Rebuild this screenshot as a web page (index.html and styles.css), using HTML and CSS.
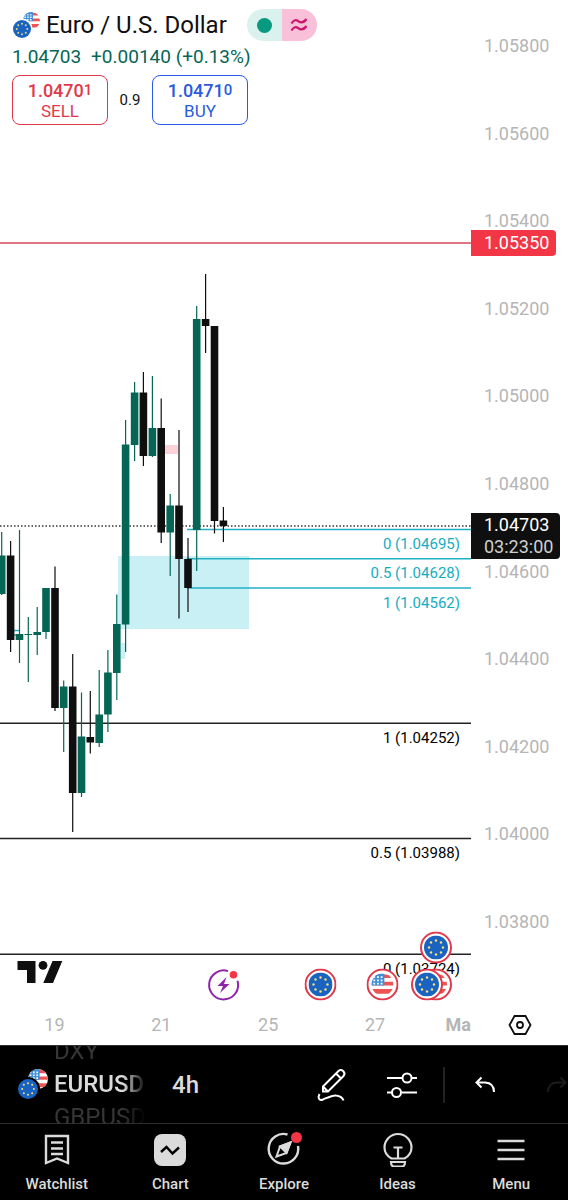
FILE: index.html
```html
<!DOCTYPE html>
<html lang="en">
<head>
    <meta charset="UTF-8">
    <meta name="viewport" content="width=device-width, initial-scale=1.0">
    <title>EURUSD 4h</title>
    <link rel="stylesheet" href="styles.css">
</head>
<body>

<!-- Shared flag artwork -->
<svg class="defs" width="0" height="0" aria-hidden="true">
    <defs>
        <clipPath id="round"><circle cx="12" cy="12" r="12"/></clipPath>
        <symbol id="eu" viewBox="0 0 24 24">
            <circle cx="12" cy="12" r="12" fill="#1b63c1"/>
            <g fill="#f2e27c">
                <circle cx="12" cy="5" r="1.2"/><circle cx="17" cy="7" r="1.2"/>
                <circle cx="19" cy="12" r="1.2"/><circle cx="17" cy="17" r="1.2"/>
                <circle cx="12" cy="19" r="1.2"/><circle cx="7" cy="17" r="1.2"/>
                <circle cx="5" cy="12" r="1.2"/><circle cx="7" cy="7" r="1.2"/>
            </g>
        </symbol>
        <symbol id="us" viewBox="0 0 24 24">
            <g clip-path="url(#round)">
                <rect width="24" height="24" fill="#fff"/>
                <path d="M0 1h24v4H0zM0 9h24v4H0zM0 17h24v5H0z" fill="#ec5554"/>
                <rect width="14" height="13" fill="#3f8fd8"/>
                <path d="M2 3h2v2H2zM6 3h2v2H6zM10 3h2v2h-2zM2 6.500h2v2H2zM6 6.500h2v2H6zM10 6.500h2v2h-2zM2 10h2v2H2zM6 10h2v2H6zM10 10h2v2h-2z" fill="#fff"/>
            </g>
        </symbol>
        <symbol id="eu-event" viewBox="0 0 32 32">
            <circle cx="16" cy="16" r="15" fill="#fff" stroke="#e0394a" stroke-width="2"/>
            <use href="#eu" x="4" y="4" width="24" height="24"/>
        </symbol>
        <symbol id="us-event" viewBox="0 0 32 32">
            <circle cx="16" cy="16" r="15" fill="#fff" stroke="#e0394a" stroke-width="2"/>
            <use href="#us" x="5" y="5" width="22" height="22"/>
        </symbol>
    </defs>
</svg>

<main class="chart">
    <div class="chart-body">
        <div class="plot">
            <svg class="plot-canvas" role="img" aria-label="Euro / U.S. Dollar 4h candles">
                <rect class="zone" x="118" y="556" width="131" height="73"/>
                <rect class="zone" x="121" y="643" width="4" height="16"/>
                <rect class="zone-red" x="165" y="445" width="13" height="9"/>
                <path class="fib-line" d="M14 630.500h5M14 635h3"/>

                <line class="alert-line" x1="0" y1="243" x2="100%" y2="243"/>
                <line class="level" x1="0" y1="723.300" x2="100%" y2="723.300"/>
                <line class="level" x1="0" y1="838.500" x2="100%" y2="838.500"/>
                <line class="level" x1="0" y1="954.300" x2="100%" y2="954.300"/>
                <line class="last-line" x1="0" y1="526" x2="100%" y2="526"/>
                <line class="fib-line" x1="187" y1="529.500" x2="100%" y2="529.500"/>
                <line class="fib-line" x1="187" y1="558.700" x2="100%" y2="558.700"/>
                <line class="fib-line" x1="187" y1="588" x2="100%" y2="588"/>

                <g id="candles"></g>

                <g class="fib-text">
                    <text x="100%" y="549" dx="-11">0 (1.04695)</text>
                    <text x="100%" y="578" dx="-11">0.5 (1.04628)</text>
                    <text x="100%" y="608" dx="-11">1 (1.04562)</text>
                </g>
                <g class="level-text">
                    <text x="100%" y="743" dx="-11">1 (1.04252)</text>
                    <text x="100%" y="858" dx="-11">0.5 (1.03988)</text>
                    <text x="100%" y="974" dx="-11">0 (1.03724)</text>
                </g>

                <!-- Logo -->
                <g fill="#0f0f0f">
                    <path d="M17.500 961H35.500V983H27V970H17.500z"/>
                    <circle cx="43" cy="965.300" r="4.400"/>
                    <path d="M52.500 961H62.300L53 983H43.300z"/>
                </g>

                <!-- Upcoming event -->
                <path d="M228 971.100A14.500 14.500 0 1 0 237.500 980.700" fill="none" stroke="#8e24aa" stroke-width="2"/>
                <path d="M226.500 977L217.500 986H223L220 993L229.500 984H224z" fill="#8e24aa"/>
                <circle cx="233.500" cy="974.700" r="3.800" fill="#f23645"/>

                <use href="#eu-event" x="304.500" y="968.500" width="32" height="32"/>
                <use href="#us-event" x="366.500" y="968.500" width="32" height="32"/>
                <use href="#us-event" x="420" y="968.500" width="32" height="32"/>
                <use href="#eu-event" x="411" y="968.500" width="32" height="32"/>
                <use href="#eu-event" x="420" y="931.500" width="32" height="32"/>
            </svg>

            <div class="legend">
                <div class="symbol-row">
                    <svg class="pair" viewBox="0 0 28 28" aria-hidden="true">
                        <use href="#us" x="11" y="1" width="17" height="17"/>
                        <circle cx="10" cy="18" r="10.500" fill="#fff"/>
                        <use href="#eu" x="1" y="9" width="18" height="18"/>
                    </svg>
                    <h1>Euro / U.S. Dollar</h1>
                    <div class="status">
                        <span class="status-open"><i class="dot"></i></span>
                        <span class="status-approx">
                            <svg width="18" height="14" viewBox="0 0 18 14" fill="none" stroke="#d0126b" stroke-width="2.200" aria-hidden="true">
                                <path d="M1.500 5.500C4 1.500 6 1.500 8.500 3.300S13.500 5 16.500 1M1.500 12.500C4 8.500 6 8.500 8.500 10.300S13.500 12 16.500 8"/>
                            </svg>
                        </span>
                    </div>
                </div>
                <p class="change"><span>1.04703</span><span>+0.00140 (+0.13%)</span></p>
                <div class="trade">
                    <button class="trade-btn sell"><b>1.0470<small>1</small></b>SELL</button>
                    <span class="spread">0.9</span>
                    <button class="trade-btn buy"><b>1.0471<small>0</small></b>BUY</button>
                </div>
            </div>
        </div>

        <div class="price-axis">
            <span>1.05800</span>
            <span>1.05600</span>
            <span>1.05400</span>
            <span>1.05200</span>
            <span>1.05000</span>
            <span>1.04800</span>
            <span>1.04600</span>
            <span>1.04400</span>
            <span>1.04200</span>
            <span>1.04000</span>
            <span>1.03800</span>
            <div class="tag tag-alert">1.05350</div>
            <div class="tag tag-last">1.04703<br><em>03:23:00</em></div>
        </div>
    </div>

    <div class="time-row">
        <div class="time-axis">
            <span>19</span>
            <span>21</span>
            <span>25</span>
            <span>27</span>
            <span class="month">Ma</span>
        </div>
        <button class="axis-settings" aria-label="Chart settings">
            <svg width="24" height="22" viewBox="0 0 24 22" fill="none" stroke="#0f0f0f" stroke-width="1.800">
                <path d="M6.500 2h11l5 9-5 9h-11l-5-9z"/>
                <circle cx="12" cy="11" r="3"/>
            </svg>
        </button>
    </div>
</main>

<div class="toolbar">
    <button class="symbol-picker">
        <svg class="pair" viewBox="0 0 30 31" aria-hidden="true">
            <use href="#us" x="10" y="0" width="20" height="20"/>
            <circle cx="10" cy="20" r="12" fill="#000"/>
            <use href="#eu" x="0" y="10" width="20" height="20"/>
        </svg>
        <span class="wheel">
            <span class="wheel-side">DXY</span>
            <span>EURUSD</span>
            <span class="wheel-side">GBPUSD</span>
        </span>
    </button>
    <button class="interval">4h</button>
    <div class="tools">
        <button aria-label="Draw">
            <svg width="32" height="36" viewBox="0 0 32 36" fill="none" stroke="#fff" stroke-width="2">
                <path d="M7 19.500L22.500 4Q25 2 27.300 4.200T27.500 9L12 24.500H7zM7 19.500L12 24.500M20 6.500l5 5"/>
                <path d="M3.500 27C1.500 31 3 34 7 32.500C13 30 17 28 20 28.500C24 29 26.500 30.500 27.500 33.500"/>
            </svg>
        </button>
        <button aria-label="Indicators">
            <svg width="32" height="28" viewBox="0 0 32 28" fill="none" stroke="#fff" stroke-width="2">
                <path d="M1 7h15.500M25.500 7H31M1 21.500h5M15.500 21.500H31"/>
                <circle cx="21" cy="7" r="4.500"/>
                <circle cx="10.500" cy="21.500" r="4.500"/>
            </svg>
        </button>
    </div>
    <div class="history">
        <button aria-label="Undo">
            <svg width="20" height="18" viewBox="0 0 20 18" fill="none" stroke="#fff" stroke-width="2">
                <path d="M6.500 1.500L1.500 6.500L6.500 11.500M1.500 6.500H10Q19 7 19 16"/>
            </svg>
        </button>
        <button aria-label="Redo" disabled>
            <svg width="20" height="18" viewBox="0 0 20 18" fill="none" stroke="#1c1c1c" stroke-width="2">
                <path d="M13.500 1.500L18.500 6.500L13.500 11.500M18.500 6.500H10Q1 7 1 16"/>
            </svg>
        </button>
    </div>
</div>

<nav class="tabs">
    <a href="#">
        <svg width="36" height="36" viewBox="0 0 36 36" fill="none" stroke="#dbdbdb" stroke-width="2.400">
            <path d="M7 5h22v27l-11-4.500L7 32zM12 11.500h12M12 17.500h12M12 23h12"/>
        </svg>
        Watchlist
    </a>
    <a href="#">
        <svg width="36" height="36" viewBox="0 0 36 36" fill="none">
            <rect x="2" y="3" width="32" height="32" rx="8" fill="#dbdbdb"/>
            <path d="M9 21l5.500-5 6 6.500 6.500-6" stroke="#000" stroke-width="2.400"/>
        </svg>
        Chart
    </a>
    <a href="#">
        <svg width="36" height="36" viewBox="0 0 36 36" fill="none" stroke="#dbdbdb" stroke-width="2.400">
            <path d="M21.500 3.500A14.800 14.800 0 1 0 32 15"/>
            <path d="M24.500 11.500L14 15.500L10.500 25.500L20.500 22z" stroke-width="2"/>
            <path d="M24.500 11.500L14 15.500L20.500 22z" fill="#dbdbdb" stroke-width="2"/>
            <circle cx="30.500" cy="6.500" r="5.500" fill="#f23645" stroke="none"/>
        </svg>
        Explore
    </a>
    <a href="#">
        <svg width="36" height="36" viewBox="0 0 36 36" fill="none" stroke="#dbdbdb" stroke-width="2.200">
            <path d="M11.500 27.500C7 25 4.500 21 4.500 16.500a13.500 13.500 0 0 1 27 0C31.500 21 29 25 24.500 27.500zM13.500 16.500h9M18 16.500v11M11 31h14c0 3-1 4.500-3 4.500h-8c-2 0-3-1.500-3-4.500z"/>
        </svg>
        Ideas
    </a>
    <a href="#">
        <svg width="36" height="36" viewBox="0 0 36 36" fill="none" stroke="#dbdbdb" stroke-width="2.600">
            <path d="M4.500 10h27M4.500 19h27M4.500 28h27"/>
        </svg>
        Menu
    </a>
</nav>

<script src="script.js"></script>
</body>
</html>
```

FILE: styles.css
```css
* {
    margin: 0;
    padding: 0;
    box-sizing: border-box;
}

body {
    display: flex;
    flex-direction: column;
    min-height: 100vh;
    font-family: Roboto, sans-serif;
    background-color: #fff;
    color: #0f0f0f;
}

button {
    font: inherit;
    color: inherit;
    background: none;
    border: none;
    cursor: pointer;
}

.defs {
    position: absolute;
}

/* Chart */
.chart {
    flex: 1;
    display: flex;
    flex-direction: column;
}

.chart-body {
    flex: 1;
    display: flex;
    min-height: 1004px;
}

.plot {
    flex: 1;
    position: relative;
}

.plot-canvas {
    position: absolute;
    width: 100%;
    height: 100%;
}

.zone {
    fill: #c9f0f5;
}

.zone-red {
    fill: #fbd2d8;
}

.alert-line {
    stroke: #d5495a;
    stroke-width: 1.5;
}

.level {
    stroke: #222;
    stroke-width: 1.5;
}

.last-line {
    stroke: #333;
    stroke-width: 1.5;
    stroke-dasharray: 1.5 2;
}

.fib-line {
    stroke: #22b1c4;
    stroke-width: 1.5;
}

.fib-text,
.level-text {
    font-size: 15px;
    text-anchor: end;
}

.fib-text {
    fill: #14adc0;
}

.up {
    fill: #056656;
}

.down {
    fill: #0f0f0f;
}

/* Legend over the plot */
.legend {
    position: absolute;
    top: 8px;
    left: 12px;
}

.symbol-row {
    display: flex;
    align-items: center;
    height: 34px;
}

.pair {
    width: 28px;
    height: 28px;
}

.symbol-row h1 {
    margin: 0 20px 0 6px;
    font-size: 24px;
    font-weight: 400;
    white-space: nowrap;
}

.status {
    display: flex;
    height: 32px;
    border-radius: 16px;
    overflow: hidden;
}

.status span {
    display: flex;
    align-items: center;
    justify-content: center;
    width: 35px;
}

.status-open {
    background-color: #daf1ed;
}

.status-approx {
    background-color: #f8c1d9;
}

.dot {
    width: 15px;
    height: 15px;
    border-radius: 50%;
    background-color: #089981;
}

.change {
    display: flex;
    gap: 10px;
    font-size: 19px;
    line-height: 30px;
    color: #056656;
    white-space: nowrap;
}

.trade {
    display: flex;
    align-items: center;
    margin-top: 3px;
}

.trade-btn {
    width: 96px;
    height: 50px;
    border: 1px solid;
    border-radius: 8px;
    font-size: 17px;
    line-height: 20px;
}

.trade-btn b {
    display: block;
    font-size: 18px;
    font-weight: 500;
}

.trade-btn small {
    font-size: 15px;
    vertical-align: 2px;
}

.sell {
    color: #e0394a;
}

.buy {
    color: #2a5ae0;
}

.spread {
    width: 44px;
    text-align: center;
    font-size: 15px;
}

/* Price axis */
.price-axis {
    position: relative;
    display: flex;
    flex-direction: column;
    justify-content: space-between;
    width: 97px;
    height: 934px;
    padding-top: 34px;
    padding-left: 13px;
    font-size: 18px;
    line-height: 24px;
    color: #b5b5b5;
}

.tag {
    position: absolute;
    left: 0;
    padding: 1px 7px 1px 13px;
    border-radius: 0 4px 4px 0;
    color: #fff;
}

.tag-alert {
    top: 230px;
    background-color: #f23645;
}

.tag-last {
    top: 513px;
    background-color: #0f0f0f;
    line-height: 22px;
}

.tag em {
    font-style: normal;
    color: #cfcfcf;
}

/* Time axis */
.time-row {
    display: flex;
    height: 41px;
}

.time-axis {
    flex: 1;
    display: flex;
    align-items: center;
    padding-left: 1px;
    overflow: hidden;
    font-size: 18px;
    color: #b5b5b5;
}

.time-axis span {
    width: 107px;
    text-align: center;
}

.time-axis .month {
    width: auto;
    padding-left: 17px;
    font-weight: 700;
}

.axis-settings {
    display: flex;
    align-items: center;
    justify-content: center;
    width: 97px;
}

/* Toolbar */
.toolbar {
    display: flex;
    align-items: center;
    height: 78px;
    border-top: 1px solid #2e2e2e;
    background-color: #000;
    color: #dbdbdb;
    overflow: hidden;
}

.symbol-picker {
    display: flex;
    align-items: center;
    gap: 6px;
    height: 77px;
    padding-left: 18px;
    font-size: 24px;
}

.symbol-picker .pair {
    width: 30px;
    height: 31px;
}

.wheel {
    width: 92px;
    line-height: 33px;
    text-align: left;
    -webkit-mask-image: linear-gradient(to right, #000 75%, transparent);
    mask-image: linear-gradient(to right, #000 75%, transparent);
}

.wheel span {
    display: block;
    font-weight: 500;
}

.wheel .wheel-side {
    color: #363636;
    font-weight: 400;
}

.interval {
    padding-left: 26px;
    font-size: 24px;
    font-weight: 500;
}

.tools {
    flex: 1;
    display: flex;
    align-items: center;
    justify-content: flex-end;
    gap: 38px;
    padding-right: 25px;
}

.tools svg,
.history svg {
    display: block;
}

.history {
    display: flex;
    align-items: center;
    gap: 52px;
    height: 36px;
    padding-left: 30px;
    margin-right: 1px;
    border-left: 2px solid #222;
}

/* Bottom tabs */
.tabs {
    display: flex;
    height: 77px;
    border-top: 1px solid #2e2e2e;
    background-color: #000;
}

.tabs a {
    flex: 1;
    display: flex;
    flex-direction: column;
    align-items: center;
    padding-top: 7px;
    gap: 8px;
    font-size: 15px;
    font-weight: 500;
    line-height: 18px;
    color: #dbdbdb;
    text-decoration: none;
}
```

FILE: script.js
```js
// x, high, body top, body bottom, low, direction
const candles = [
    [1.7, 532, 555.5, 594, 595, 'up'],
    [10.6, 541, 555.5, 640, 652, 'down'],
    [19.5, 530, 634, 640, 663, 'up'],
    [28.3, 617, 634, 635, 682, 'up'],
    [37.2, 607, 632, 635, 655, 'up'],
    [46, 588, 588, 632, 639, 'up'],
    [55, 566.5, 588, 708, 711, 'down'],
    [63.7, 680.5, 686.5, 708, 752, 'up'],
    [72.7, 654, 686.5, 793, 832, 'down'],
    [81.5, 692.5, 736.5, 793, 797, 'up'],
    [90.3, 691, 737, 742.5, 753.5, 'down'],
    [99.2, 670, 714.5, 743, 747, 'up'],
    [107.9, 650, 672.5, 714.5, 732, 'up'],
    [116.8, 594.5, 624, 673, 700, 'up'],
    [125.6, 420, 444.5, 624.5, 652, 'up'],
    [134.6, 382, 392.5, 445, 461, 'up'],
    [143.4, 372, 392.5, 456, 466, 'down'],
    [152.4, 376, 428, 456, 457, 'up'],
    [161.2, 398.5, 428, 532.5, 543, 'down'],
    [170.2, 494, 505.5, 532.5, 576, 'up'],
    [179, 430, 505.5, 559, 618.5, 'down'],
    [188, 538, 559, 588, 612, 'down'],
    [196.7, 306, 319, 530, 571, 'up'],
    [205.6, 274, 319, 326, 353, 'down'],
    [214.5, 326, 326, 521, 533.5, 'down'],
    [223.4, 507, 520.5, 526, 542, 'down']
];

function rect(x, y, width, height, name) {
    const el = document.createElementNS('http://www.w3.org/2000/svg', 'rect');
    el.setAttribute('x', x);
    el.setAttribute('y', y);
    el.setAttribute('width', width);
    el.setAttribute('height', height);
    el.setAttribute('class', name);
    return el;
}

const group = document.getElementById('candles');

candles.forEach(([x, high, top, bottom, low, dir]) => {
    group.appendChild(rect(x - 0.6, high, 1.2, low - high, dir));
    group.appendChild(rect(x - 3.8, top, 7.6, bottom - top, dir));
});
```
